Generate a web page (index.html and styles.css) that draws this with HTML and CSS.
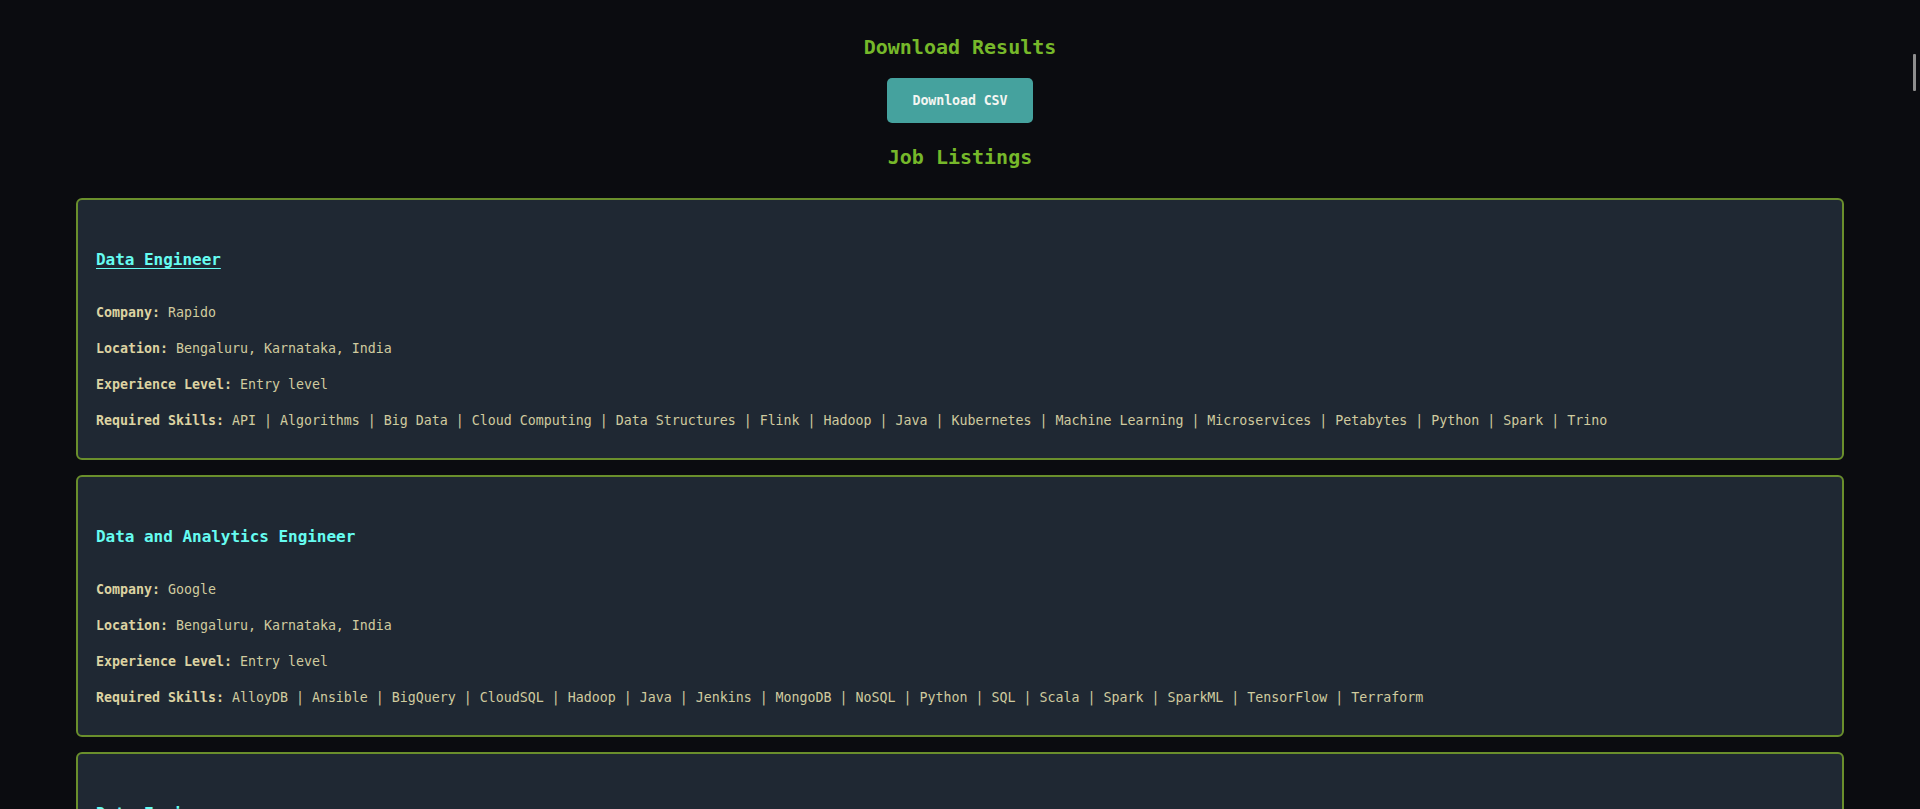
FILE: index.html
```html
<!DOCTYPE html>
<html lang="en">
<head>
<meta charset="utf-8">
<title>Job Listings</title>
<link rel="stylesheet" href="styles.css">
</head>
<body>
<main class="page">
  <section class="download">
    <h2 class="section-title">Download Results</h2>
    <button class="btn" type="button">Download CSV</button>
  </section>
  <h2 class="section-title listings-title">Job Listings</h2>
  <div class="jobs">
    <article class="job-card">
      <h3 class="job-title"><a class="job-link" href="#">Data Engineer</a></h3>
      <p class="job-line"><strong class="label">Company:</strong> Rapido</p>
      <p class="job-line"><strong class="label">Location:</strong> Bengaluru, Karnataka, India</p>
      <p class="job-line"><strong class="label">Experience Level:</strong> Entry level</p>
      <p class="job-line"><strong class="label">Required Skills:</strong> API | Algorithms | Big Data | Cloud Computing | Data Structures | Flink | Hadoop | Java | Kubernetes | Machine Learning | Microservices | Petabytes | Python | Spark | Trino</p>
    </article>
    <article class="job-card">
      <h3 class="job-title">Data and Analytics Engineer</h3>
      <p class="job-line"><strong class="label">Company:</strong> Google</p>
      <p class="job-line"><strong class="label">Location:</strong> Bengaluru, Karnataka, India</p>
      <p class="job-line"><strong class="label">Experience Level:</strong> Entry level</p>
      <p class="job-line"><strong class="label">Required Skills:</strong> AlloyDB | Ansible | BigQuery | CloudSQL | Hadoop | Java | Jenkins | MongoDB | NoSQL | Python | SQL | Scala | Spark | SparkML | TensorFlow | Terraform</p>
    </article>
    <article class="job-card">
      <h3 class="job-title"><a class="job-link" href="#">Data Engineer</a></h3>
      <p class="job-line"><strong class="label">Company:</strong> Swiggy</p>
      <p class="job-line"><strong class="label">Location:</strong> Bengaluru, Karnataka, India</p>
      <p class="job-line"><strong class="label">Experience Level:</strong> Entry level</p>
      <p class="job-line"><strong class="label">Required Skills:</strong> Python | SQL | Spark</p>
    </article>
  </div>
</main>
<div class="scroll-thumb"></div>
</body>
</html>
```
FILE: styles.css
```css
html, body {
  margin: 0;
  padding: 0;
  background: #0b0c10;
  overflow: hidden;
}
body {
  font-family: "DejaVu Sans Mono", "Liberation Mono", monospace;
  color: #d2cc9e;
}
.page {
  padding: 0 76px;
}
.download {
  display: flex;
  flex-direction: column;
  align-items: center;
  padding-top: 33px;
}
.section-title {
  margin: 0;
  font-size: 20px;
  line-height: 28px;
  font-weight: bold;
  color: #76b82a;
  text-align: center;
}
.btn {
  margin-top: 17px;
  width: 146px;
  height: 45px;
  border: none;
  border-radius: 5px;
  background: #45a29e;
  color: #f4f6f2;
  font-family: "DejaVu Sans Mono", "Liberation Mono", monospace;
  font-weight: bold;
  font-size: 13.3px;
  letter-spacing: -0.1px;
}
.listings-title {
  margin-top: 20px;
}
.jobs {
  margin-top: 27px;
  display: flex;
  flex-direction: column;
  gap: 15px;
}
.job-card {
  background: #1f2833;
  border: 2px solid #6a8f2c;
  border-radius: 6px;
  padding: 20px 18px 12px;
}
.job-title {
  margin: 30px 0 33px;
  font-size: 16px;
  line-height: 19px;
  color: #66fcf1;
  letter-spacing: -0.03px;
}
.job-link {
  color: #66fcf1;
  text-decoration: underline;
  text-underline-offset: 3px;
}
.job-line {
  margin: 14px 0;
  font-size: 13.3px;
  line-height: 22px;
  letter-spacing: -0.01px;
  color: #d0cb9f;
}
.label {
  color: #dcd3a2;
}
.scroll-thumb {
  position: fixed;
  top: 54px;
  right: 4px;
  width: 3px;
  height: 37px;
  background: #8e8e8e;
  border-radius: 1px;
}
```
